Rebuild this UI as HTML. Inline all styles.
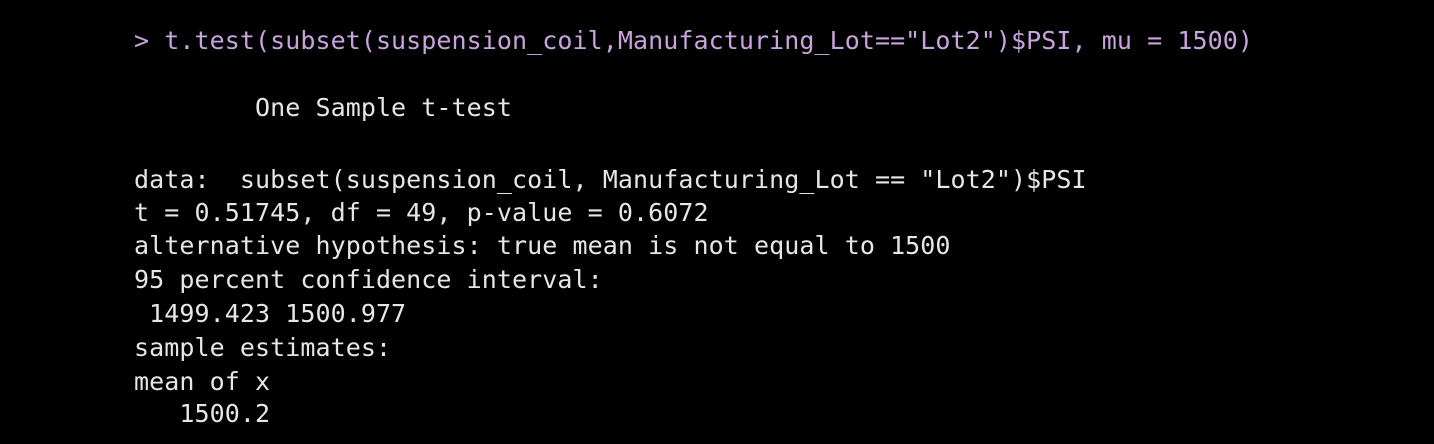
<!DOCTYPE html>
<html><head><style>
html,body{margin:0;padding:0;background:#000;width:1434px;height:444px;overflow:hidden}
.l{position:absolute;left:134px;height:34px;line-height:34px;font-family:"DejaVu Sans Mono","Liberation Mono",monospace;font-size:25px;letter-spacing:0.07px;color:#e6e6e6;white-space:pre}
.p{color:#c9a3dd}
</style></head><body>
<div class="l p" style="top:24px">&gt; t.test(subset(suspension_coil,Manufacturing_Lot=="Lot2")$PSI, mu = 1500)</div>
<div class="l" style="top:91px">        One Sample t-test</div>
<div class="l" style="top:163px">data:  subset(suspension_coil, Manufacturing_Lot == "Lot2")$PSI</div>
<div class="l" style="top:196px">t = 0.51745, df = 49, p-value = 0.6072</div>
<div class="l" style="top:229px">alternative hypothesis: true mean is not equal to 1500</div>
<div class="l" style="top:263px">95 percent confidence interval:</div>
<div class="l" style="top:297px"> 1499.423 1500.977</div>
<div class="l" style="top:331px">sample estimates:</div>
<div class="l" style="top:365px">mean of x </div>
<div class="l" style="top:397px">   1500.2 </div>
</body></html>
